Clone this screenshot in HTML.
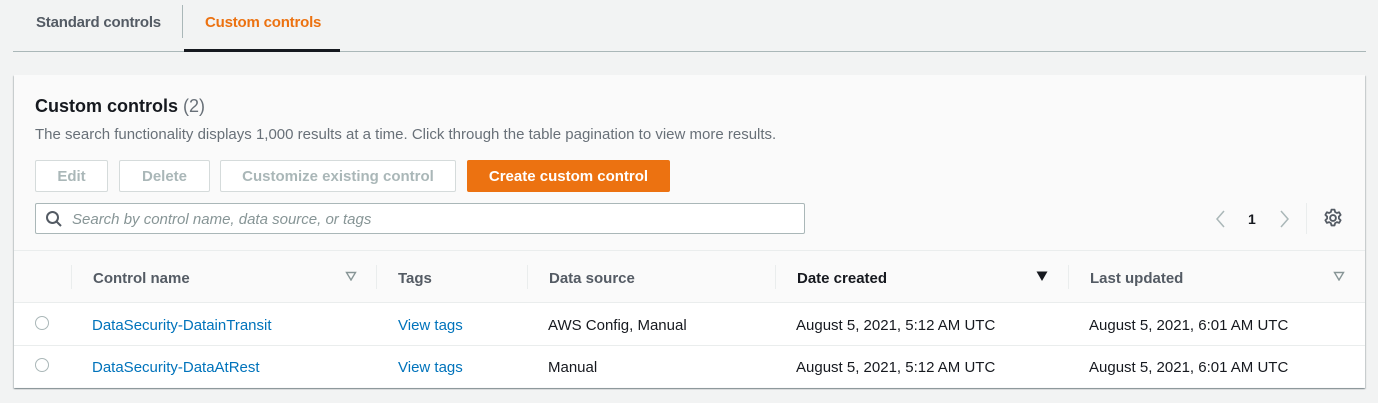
<!DOCTYPE html>
<html><head><style>
*{margin:0;padding:0;box-sizing:border-box}
body{width:1378px;height:403px;background:#f2f3f3;font-family:"Liberation Sans",sans-serif;position:relative;overflow:hidden;color:#16191f}
.a{position:absolute;white-space:nowrap}
.b{font-weight:bold}
.btn{position:absolute;top:160px;height:32px;border:1px solid #d5dbdb;background:#fff;color:#aab7b8;font-weight:bold;font-size:15px;display:flex;align-items:center;justify-content:center;border-radius:2px;padding-top:1px}
.sep{position:absolute;width:1px;background:#eaeded;top:265px;height:24px}
.link{color:#0073bb;font-size:15px}
.cell{font-size:15px;color:#16191f}
.radio{position:absolute;width:14px;height:14px;border:1px solid #aab7b8;border-radius:50%;background:#fff}
</style></head><body>
<div class="a b" style="left:36px;top:14px;font-size:15px;color:#545b64;letter-spacing:-0.2px">Standard controls</div>
<div class="a" style="left:182px;top:5px;width:1px;height:33px;background:#aab7b8"></div>
<div class="a b" style="left:205px;top:14px;font-size:15px;color:#ec7211;letter-spacing:-0.2px">Custom controls</div>
<div class="a" style="left:13px;top:51px;width:1353px;height:1px;background:#aab7b8"></div>
<div class="a" style="left:184px;top:49px;width:156px;height:3px;background:#16191f"></div>

<div class="a" style="left:14px;top:75px;width:1351px;height:313px;background:#fafafa;box-shadow:0 1px 1px rgba(0,28,36,.3),1px 1px 1px rgba(0,28,36,.15),-1px 1px 1px rgba(0,28,36,.15)"></div>
<div class="a b" style="left:35px;top:96px;font-size:18px">Custom controls <span style="font-weight:normal;color:#687078">(2)</span></div>
<div class="a" style="left:35px;top:126px;font-size:15px;color:#687078">The search functionality displays 1,000 results at a time. Click through the table pagination to view more results.</div>
<div class="btn" style="left:35px;width:73px">Edit</div>
<div class="btn" style="left:119px;width:91px">Delete</div>
<div class="btn" style="left:220px;width:236px">Customize existing control</div>
<div class="btn" style="left:467px;width:203px;background:#ec7211;border-color:#ec7211;color:#fff">Create custom control</div>
<div class="a" style="left:35px;top:203px;width:770px;height:31px;border:1px solid #aab7b8;background:#fff;border-radius:2px"></div>
<svg class="a" style="left:45px;top:210px" width="18" height="18" viewBox="0 0 18 18"><circle cx="7.5" cy="7.5" r="5.5" fill="none" stroke="#545b64" stroke-width="2"/><path d="M11.5 11.5L16 16" stroke="#545b64" stroke-width="2"/></svg>
<div class="a" style="left:72px;top:211px;font-size:15px;font-style:italic;color:#879596">Search by control name, data source, or tags</div>
<svg class="a" style="left:1214px;top:209px" width="14" height="20"><path d="M10 2L3 10L10 18" fill="none" stroke="#aab7b8" stroke-width="1.5"/></svg>
<div class="a b" style="left:1248px;top:211px;font-size:14px">1</div>
<svg class="a" style="left:1278px;top:209px" width="14" height="20"><path d="M3 2L10 10L3 18" fill="none" stroke="#aab7b8" stroke-width="1.5"/></svg>
<div class="a" style="left:1306px;top:203px;width:1px;height:31px;background:#eaeded"></div>
<svg class="a" style="left:1323px;top:208px" width="20" height="20" viewBox="0 0 18 18"><circle cx="9" cy="9" r="2.6" fill="none" stroke="#545b64" stroke-width="1.7"/><path d="M7.6 1.5h2.8l.5 2.1 1.6.9 2-.7 1.4 2.4-1.6 1.5v1.8l1.6 1.5-1.4 2.4-2-.7-1.6.9-.5 2.1H7.6l-.5-2.1-1.6-.9-2 .7-1.4-2.4 1.6-1.5V7.7L2.1 6.2l1.4-2.4 2 .7 1.6-.9z" fill="none" stroke="#545b64" stroke-width="1.6" stroke-linejoin="round"/></svg>

<div class="a" style="left:14px;top:250px;width:1351px;height:1px;background:#eaeded"></div>
<div class="sep" style="left:71px"></div>
<div class="a b" style="left:93px;top:270px;font-size:15px;color:#545b64">Control name</div>
<svg class="a" style="left:345px;top:271px" width="12" height="10"><path d="M1.5 1.5h9L6 9z" fill="none" stroke="#879596" stroke-width="1.4"/></svg>
<div class="sep" style="left:376px"></div>
<div class="a b" style="left:398px;top:270px;font-size:15px;color:#545b64">Tags</div>
<div class="sep" style="left:527px"></div>
<div class="a b" style="left:549px;top:270px;font-size:15px;color:#545b64">Data source</div>
<div class="sep" style="left:775px"></div>
<div class="a b" style="left:797px;top:270px;font-size:15px;color:#16191f">Date created</div>
<svg class="a" style="left:1036px;top:271px" width="12" height="10"><path d="M0.5 0.5h11L6 10z" fill="#16191f"/></svg>
<div class="sep" style="left:1068px"></div>
<div class="a b" style="left:1090px;top:270px;font-size:15px;color:#545b64">Last updated</div>
<svg class="a" style="left:1333px;top:271px" width="12" height="10"><path d="M1.5 1.5h9L6 9z" fill="none" stroke="#879596" stroke-width="1.4"/></svg>

<div class="a" style="left:14px;top:302px;width:1351px;height:85px;background:#fff;border-top:1px solid #eaeded"></div>
<div class="a" style="left:14px;top:345px;width:1351px;height:1px;background:#eaeded"></div>
<div class="radio" style="left:35px;top:316px"></div>
<div class="a link" style="left:92px;top:317px">DataSecurity-DatainTransit</div>
<div class="a link" style="left:398px;top:317px">View tags</div>
<div class="a cell" style="left:548px;top:317px">AWS Config, Manual</div>
<div class="a cell" style="left:796px;top:317px">August 5, 2021, 5:12 AM UTC</div>
<div class="a cell" style="left:1089px;top:317px">August 5, 2021, 6:01 AM UTC</div>
<div class="radio" style="left:35px;top:358px"></div>
<div class="a link" style="left:92px;top:359px">DataSecurity-DataAtRest</div>
<div class="a link" style="left:398px;top:359px">View tags</div>
<div class="a cell" style="left:548px;top:359px">Manual</div>
<div class="a cell" style="left:796px;top:359px">August 5, 2021, 5:12 AM UTC</div>
<div class="a cell" style="left:1089px;top:359px">August 5, 2021, 6:01 AM UTC</div>
</body></html>
